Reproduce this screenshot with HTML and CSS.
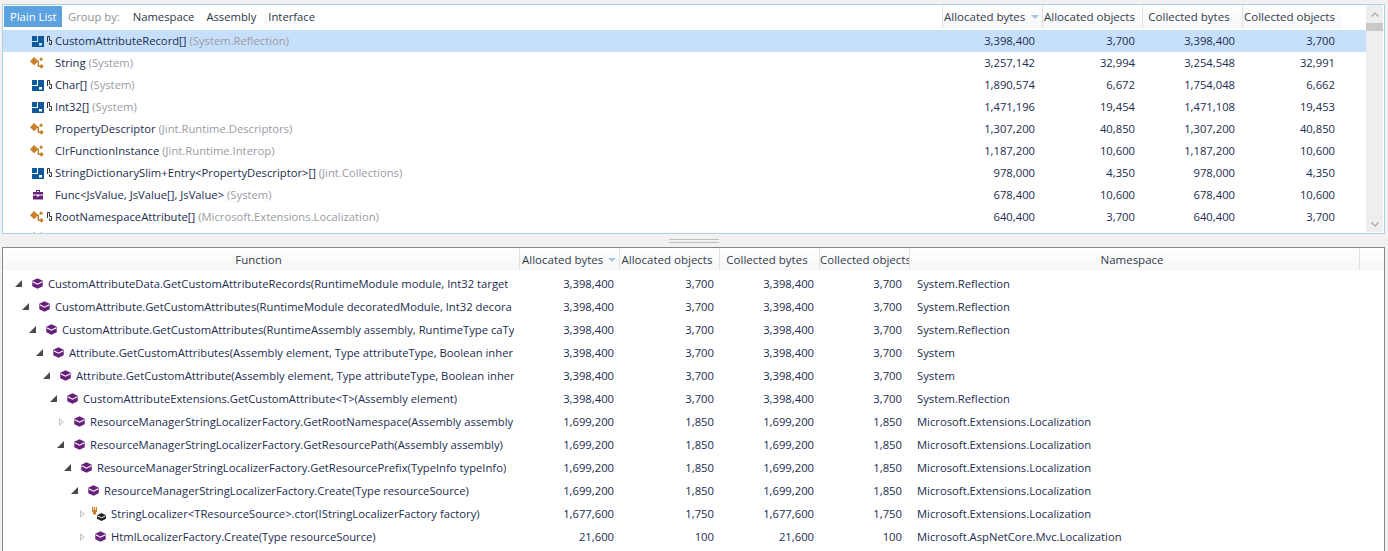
FILE: index.html
```html
<!DOCTYPE html>
<html lang="en">
<head>
<meta charset="utf-8">
<title>Memory allocations</title>
<link rel="stylesheet" href="styles.css">
</head>
<body>
<svg class="defs" width="0" height="0" aria-hidden="true">
  <symbol id="i-array" viewBox="0 0 12 11">
    <path fill="#0e5a9c" fill-rule="evenodd" d="M0 0h12v11h-12zM5 0v5h-5v1h6v-6zM7 7v2.500h3v-2.500z"/>
  </symbol>
  <symbol id="i-link" viewBox="0 0 5 9">
    <path fill="none" stroke="#333" d="M.5 6v-5.500h2v4h2v4h-2v-2"/>
  </symbol>
  <symbol id="i-class" viewBox="0 0 13 11">
    <path fill="#c9802a" d="M0 3.800 3.800 0l3.800 3.800-3.800 3.800z"/>
    <path fill="#c9802a" d="M8.500 2l1.800-1.800 1.800 1.800-1.800 1.800zM8.500 8.500l2.100-2.100 2.200 2.100-2.200 2.300z"/>
    <path fill="none" stroke="#c9802a" stroke-width="1.300" d="M5 3.800h2.700v4.700h2.500"/>
  </symbol>
  <symbol id="i-delegate" viewBox="0 0 10 10">
    <path fill="#68217a" d="M3 0h4v2h3v2.500h-10v-2.500h3zM4 1v1h2v-1zM0 5.500h4v1h2v-1h4v4h-10z"/>
  </symbol>
  <symbol id="i-method" viewBox="0 0 12 12">
    <path fill="#68217a" d="M6 .3l5.700 2.700v6l-5.700 2.700-5.700-2.700v-6z"/>
    <path fill="none" stroke="#fff" stroke-width="1.200" d="M.8 4.200l5.200 2.600 5.200-2.600"/>
  </symbol>
  <symbol id="i-ctor" viewBox="0 0 14 14">
    <path fill="#c9802a" d="M0 0h1.200v3h.8v-3h1v3h.8v-3h1.200v5h-1v2.500h-3v-2.500h-1z"/>
    <path fill="#222" d="M9.500 6l4.500 2.200v3.600l-4.500 2.200-4.500-2.200v-3.600z"/>
    <path fill="none" stroke="#fff" d="M5.300 8.800l4.200 2 4.200-2"/>
  </symbol>
</svg>

<main class="app">
  <section class="panel panel-top">
    <div class="top-main">
      <div class="toolbar-row">
        <div class="toolbar">
          <span class="tab-active">Plain List</span>
          <span class="group-label">Group by:</span>
          <span class="group-item">Namespace</span>
          <span class="group-item">Assembly</span>
          <span class="group-item">Interface</span>
        </div>
        <div class="top-head">
          <span class="hcell sorted">Allocated bytes<i class="sort"></i></span>
          <span class="hcell">Allocated objects</span>
          <span class="hcell">Collected bytes</span>
          <span class="hcell">Collected objects</span>
        </div>
      </div>
      <div class="trow selected"><span class="tname"><span class="gutter"><svg class="ic-arr"><use href="#i-array"/></svg><svg class="ic-link"><use href="#i-link"/></svg></span><span class="tlabel"><b>CustomAttributeRecord[]</b> <em>(System.Reflection)</em></span></span><span class="n">3,398,400</span><span class="n">3,700</span><span class="n">3,398,400</span><span class="n">3,700</span></div>
      <div class="trow"><span class="tname"><span class="gutter"><svg class="ic-cls"><use href="#i-class"/></svg></span><span class="tlabel"><b>String</b> <em>(System)</em></span></span><span class="n">3,257,142</span><span class="n">32,994</span><span class="n">3,254,548</span><span class="n">32,991</span></div>
      <div class="trow"><span class="tname"><span class="gutter"><svg class="ic-arr"><use href="#i-array"/></svg><svg class="ic-link"><use href="#i-link"/></svg></span><span class="tlabel"><b>Char[]</b> <em>(System)</em></span></span><span class="n">1,890,574</span><span class="n">6,672</span><span class="n">1,754,048</span><span class="n">6,662</span></div>
      <div class="trow"><span class="tname"><span class="gutter"><svg class="ic-arr"><use href="#i-array"/></svg><svg class="ic-link"><use href="#i-link"/></svg></span><span class="tlabel"><b>Int32[]</b> <em>(System)</em></span></span><span class="n">1,471,196</span><span class="n">19,454</span><span class="n">1,471,108</span><span class="n">19,453</span></div>
      <div class="trow"><span class="tname"><span class="gutter"><svg class="ic-cls"><use href="#i-class"/></svg></span><span class="tlabel"><b>PropertyDescriptor</b> <em>(Jint.Runtime.Descriptors)</em></span></span><span class="n">1,307,200</span><span class="n">40,850</span><span class="n">1,307,200</span><span class="n">40,850</span></div>
      <div class="trow"><span class="tname"><span class="gutter"><svg class="ic-cls"><use href="#i-class"/></svg></span><span class="tlabel"><b>ClrFunctionInstance</b> <em>(Jint.Runtime.Interop)</em></span></span><span class="n">1,187,200</span><span class="n">10,600</span><span class="n">1,187,200</span><span class="n">10,600</span></div>
      <div class="trow"><span class="tname"><span class="gutter"><svg class="ic-arr"><use href="#i-array"/></svg><svg class="ic-link"><use href="#i-link"/></svg></span><span class="tlabel"><b>StringDictionarySlim+Entry&lt;PropertyDescriptor&gt;[]</b> <em>(Jint.Collections)</em></span></span><span class="n">978,000</span><span class="n">4,350</span><span class="n">978,000</span><span class="n">4,350</span></div>
      <div class="trow"><span class="tname"><span class="gutter"><svg class="ic-del"><use href="#i-delegate"/></svg></span><span class="tlabel"><b>Func&lt;JsValue, JsValue[], JsValue&gt;</b> <em>(System)</em></span></span><span class="n">678,400</span><span class="n">10,600</span><span class="n">678,400</span><span class="n">10,600</span></div>
      <div class="trow"><span class="tname"><span class="gutter"><svg class="ic-cls"><use href="#i-class"/></svg><svg class="ic-link"><use href="#i-link"/></svg></span><span class="tlabel"><b>RootNamespaceAttribute[]</b> <em>(Microsoft.Extensions.Localization)</em></span></span><span class="n">640,400</span><span class="n">3,700</span><span class="n">640,400</span><span class="n">3,700</span></div>
      <div class="trow-peek"><svg class="ic-cls"><use href="#i-class"/></svg></div>
    </div>
    <div class="scrollbar">
      <svg class="chev chev-up" viewBox="0 0 8 5"><path d="M.5 4.500l3.500-3.500 3.500 3.500" fill="none" stroke="#a6a6a6" stroke-width="1.200"/></svg>
      <div class="thumb"></div>
      <div class="track"></div>
      <svg class="chev chev-down" viewBox="0 0 8 5"><path d="M.5.500l3.500 3.500 3.500-3.500" fill="none" stroke="#a6a6a6" stroke-width="1.200"/></svg>
    </div>
  </section>

  <div class="splitter"><div class="grip"></div></div>

  <section class="panel panel-bottom">
    <div class="bhead">
      <span class="bh c-fn">Function</span>
      <span class="bh c-num sorted">Allocated bytes<i class="sort"></i></span>
      <span class="bh c-num">Allocated objects</span>
      <span class="bh c-num">Collected bytes</span>
      <span class="bh c-co">Collected objects</span>
      <span class="bh c-ns">Namespace</span>
    </div>
    <div class="brow"><span class="c-fn d0"><span class="slot"><i class="tw open"></i></span><svg class="ic-m"><use href="#i-method"/></svg><span class="fn">CustomAttributeData.GetCustomAttributeRecords(RuntimeModule module, Int32 target</span></span><span class="c-num n">3,398,400</span><span class="c-num n">3,700</span><span class="c-num n">3,398,400</span><span class="c-co n">3,700</span><span class="c-ns2">System.Reflection</span></div>
    <div class="brow"><span class="c-fn d1"><span class="slot"><i class="tw open"></i></span><svg class="ic-m"><use href="#i-method"/></svg><span class="fn">CustomAttribute.GetCustomAttributes(RuntimeModule decoratedModule, Int32 decora</span></span><span class="c-num n">3,398,400</span><span class="c-num n">3,700</span><span class="c-num n">3,398,400</span><span class="c-co n">3,700</span><span class="c-ns2">System.Reflection</span></div>
    <div class="brow"><span class="c-fn d2"><span class="slot"><i class="tw open"></i></span><svg class="ic-m"><use href="#i-method"/></svg><span class="fn">CustomAttribute.GetCustomAttributes(RuntimeAssembly assembly, RuntimeType caTy</span></span><span class="c-num n">3,398,400</span><span class="c-num n">3,700</span><span class="c-num n">3,398,400</span><span class="c-co n">3,700</span><span class="c-ns2">System.Reflection</span></div>
    <div class="brow"><span class="c-fn d3"><span class="slot"><i class="tw open"></i></span><svg class="ic-m"><use href="#i-method"/></svg><span class="fn">Attribute.GetCustomAttributes(Assembly element, Type attributeType, Boolean inher</span></span><span class="c-num n">3,398,400</span><span class="c-num n">3,700</span><span class="c-num n">3,398,400</span><span class="c-co n">3,700</span><span class="c-ns2">System</span></div>
    <div class="brow"><span class="c-fn d4"><span class="slot"><i class="tw open"></i></span><svg class="ic-m"><use href="#i-method"/></svg><span class="fn">Attribute.GetCustomAttribute(Assembly element, Type attributeType, Boolean inher</span></span><span class="c-num n">3,398,400</span><span class="c-num n">3,700</span><span class="c-num n">3,398,400</span><span class="c-co n">3,700</span><span class="c-ns2">System</span></div>
    <div class="brow"><span class="c-fn d5"><span class="slot"><i class="tw open"></i></span><svg class="ic-m"><use href="#i-method"/></svg><span class="fn">CustomAttributeExtensions.GetCustomAttribute&lt;T&gt;(Assembly element)</span></span><span class="c-num n">3,398,400</span><span class="c-num n">3,700</span><span class="c-num n">3,398,400</span><span class="c-co n">3,700</span><span class="c-ns2">System.Reflection</span></div>
    <div class="brow"><span class="c-fn d6"><span class="slot"><i class="tw closed"></i></span><svg class="ic-m"><use href="#i-method"/></svg><span class="fn">ResourceManagerStringLocalizerFactory.GetRootNamespace(Assembly assembly</span></span><span class="c-num n">1,699,200</span><span class="c-num n">1,850</span><span class="c-num n">1,699,200</span><span class="c-co n">1,850</span><span class="c-ns2">Microsoft.Extensions.Localization</span></div>
    <div class="brow"><span class="c-fn d6"><span class="slot"><i class="tw open"></i></span><svg class="ic-m"><use href="#i-method"/></svg><span class="fn">ResourceManagerStringLocalizerFactory.GetResourcePath(Assembly assembly)</span></span><span class="c-num n">1,699,200</span><span class="c-num n">1,850</span><span class="c-num n">1,699,200</span><span class="c-co n">1,850</span><span class="c-ns2">Microsoft.Extensions.Localization</span></div>
    <div class="brow"><span class="c-fn d7"><span class="slot"><i class="tw open"></i></span><svg class="ic-m"><use href="#i-method"/></svg><span class="fn">ResourceManagerStringLocalizerFactory.GetResourcePrefix(TypeInfo typeInfo)</span></span><span class="c-num n">1,699,200</span><span class="c-num n">1,850</span><span class="c-num n">1,699,200</span><span class="c-co n">1,850</span><span class="c-ns2">Microsoft.Extensions.Localization</span></div>
    <div class="brow"><span class="c-fn d8"><span class="slot"><i class="tw open"></i></span><svg class="ic-m"><use href="#i-method"/></svg><span class="fn">ResourceManagerStringLocalizerFactory.Create(Type resourceSource)</span></span><span class="c-num n">1,699,200</span><span class="c-num n">1,850</span><span class="c-num n">1,699,200</span><span class="c-co n">1,850</span><span class="c-ns2">Microsoft.Extensions.Localization</span></div>
    <div class="brow"><span class="c-fn d9"><span class="slot"><i class="tw closed"></i></span><svg class="ic-c"><use href="#i-ctor"/></svg><span class="fn">StringLocalizer&lt;TResourceSource&gt;.ctor(IStringLocalizerFactory factory)</span></span><span class="c-num n">1,677,600</span><span class="c-num n">1,750</span><span class="c-num n">1,677,600</span><span class="c-co n">1,750</span><span class="c-ns2">Microsoft.Extensions.Localization</span></div>
    <div class="brow"><span class="c-fn d9"><span class="slot"><i class="tw closed"></i></span><svg class="ic-m"><use href="#i-method"/></svg><span class="fn">HtmlLocalizerFactory.Create(Type resourceSource)</span></span><span class="c-num n">21,600</span><span class="c-num n">100</span><span class="c-num n">21,600</span><span class="c-co n">100</span><span class="c-ns2">Microsoft.AspNetCore.Mvc.Localization</span></div>
  </section>
</main>
</body>
</html>
```
FILE: styles.css
```css
html, body { margin: 0; padding: 0; height: 551px; overflow: hidden; background: #f3f1f0; }
body { font-family: "Open Sans", "Noto Sans", sans-serif; font-size: 11.25px; color: #222c4e; }
.defs { position: absolute; }
.app { display: flex; flex-direction: column; padding: 4px 3px 0 2px; height: 547px; }

.panel { background: #fff; box-sizing: border-box; }
.panel-top { border: 1px solid #a9d3ea; height: 230px; flex: none; overflow: hidden; display: flex; }
.panel-bottom { border: 1px solid #828790; border-bottom: 0; flex: 1; overflow: hidden; }

.top-main { width: 1363px; flex: none; overflow: hidden; }
.toolbar-row { display: flex; height: 25px; }
.toolbar { display: flex; align-items: center; width: 939px; height: 23px; flex: none; gap: 12px; }
.tab-active { background: #5da2e0; color: #fff; height: 21px; line-height: 21px; width: 58px; margin: 0 -6px 0 1px; box-sizing: border-box; padding-left: 6px; white-space: nowrap; flex: none; }
.group-label { color: #8f8f8f; margin-right: 1px; }
.group-item { color: #2b3544; }

.top-head { display: flex; height: 23px; background: linear-gradient(#ffffff, #f6f7f8); }
.hcell { width: 100px; box-sizing: border-box; border-left: 1px solid #dfe2e5; padding: 0 8px 0 1px; text-align: center; font-size: 11.5px; line-height: 23px; color: #333b49; position: relative; white-space: nowrap; overflow: hidden; flex: none; }
.hcell.sorted { text-align: left; padding-left: 1px; }
.sort { position: absolute; right: 3px; top: 10px; width: 0; height: 0; border: 4px solid transparent; border-top: 4px solid #a8c4de; border-bottom: 0; }

.trow { display: flex; height: 22px; align-items: center; }
.trow.selected { background: #c6e0fb; }
.trow-peek { height: 3px; padding: 4px 0 0 27px; overflow: hidden; }
.tname { width: 939px; flex: none; display: flex; align-items: center; padding-left: 27px; box-sizing: border-box; white-space: pre; line-height: 20px; }
.gutter { width: 25px; flex: none; display: flex; align-items: center; position: relative; height: 14px; }
.tlabel b { font-weight: 400; }
.tlabel em { font-style: normal; color: #9b9ba3; }
.n { text-align: right; line-height: 20px; }
.trow .n { width: 100px; flex: none; box-sizing: border-box; padding: 0 7px 1px 0; }
.ic-arr { width: 12px; height: 11px; margin-left: 2px; flex: none; }
.ic-cls { width: 14px; height: 12px; flex: none; display: block; }
.ic-del { width: 10px; height: 10px; margin-left: 3px; flex: none; }
.ic-link { width: 5px; height: 9px; position: absolute; left: 17px; top: 2px; }

.scrollbar { width: 17px; flex: none; background: #eeeeee; display: flex; flex-direction: column; align-items: center; height: 227px; }
.chev { width: 8px; height: 5px; flex: none; }
.chev-up { margin: 7px 0 6px; }
.chev-down { margin: 0 0 5px; }
.thumb { width: 17px; height: 8px; background: #c9c9c9; flex: none; }
.track { flex: 1; }

.splitter { height: 13px; flex: none; display: flex; align-items: center; justify-content: center; }
.grip { width: 50px; height: 2px; border-top: 1px solid #bdbdbd; border-bottom: 1px solid #bdbdbd; }

.bhead { display: flex; height: 22px; background: linear-gradient(#ffffff, #f6f7f8); }
.bh { font-size: 11.5px; line-height: 23px; color: #333b49; text-align: center; white-space: nowrap; overflow: hidden; box-sizing: border-box; border-right: 1px solid #dfe2e5; padding: 0 5px 0 0; position: relative; flex: none; }
.bhead .sorted { text-align: left; padding-left: 2px; }
.c-fn { width: 517px; flex: none; }
.c-num { width: 100px; flex: none; box-sizing: border-box; }
.c-co { width: 90px; flex: none; box-sizing: border-box; }
.c-ns { width: 450px; }
.bhead .c-co { text-align: left; padding: 0; }

.brow { display: flex; height: 23px; align-items: center; white-space: nowrap; }
.brow:nth-child(2) { margin-top: 2px; }
.brow .n { padding-right: 6px; }
.brow .c-co.n { padding-right: 8px; }
.brow .c-fn { display: flex; align-items: center; overflow: hidden; box-sizing: border-box; padding-right: 6px; }
.fn { overflow: hidden; }
.c-ns2 { padding-left: 7px; }
.slot { width: 17px; flex: none; display: flex; align-items: center; }
.ic-m { width: 11px; height: 11px; flex: none; margin-right: 5px; }
.ic-c { width: 14px; height: 14px; flex: none; margin: 0 5px 0 -3px; }
.tw { display: block; flex: none; position: relative; }
.tw.open { width: 0; height: 0; border-style: solid; border-width: 0 0 7px 7px; border-color: transparent transparent #4a4a4a transparent; }
.tw.closed { width: 0; height: 0; margin-left: 2px; border-left: 5px solid #c4c4c4; border-top: 4px solid transparent; border-bottom: 4px solid transparent; }
.tw.closed::after { content: ""; position: absolute; left: -4px; top: -2px; width: 0; height: 0; border-left: 3px solid #f6f6f6; border-top: 2px solid transparent; border-bottom: 2px solid transparent; }
.d0 { padding-left: 12px; }
.d1 { padding-left: 19px; }
.d2 { padding-left: 26px; }
.d3 { padding-left: 33px; }
.d4 { padding-left: 40px; }
.d5 { padding-left: 47px; }
.d6 { padding-left: 54px; }
.d7 { padding-left: 61px; }
.d8 { padding-left: 68px; }
.d9 { padding-left: 75px; }
```
